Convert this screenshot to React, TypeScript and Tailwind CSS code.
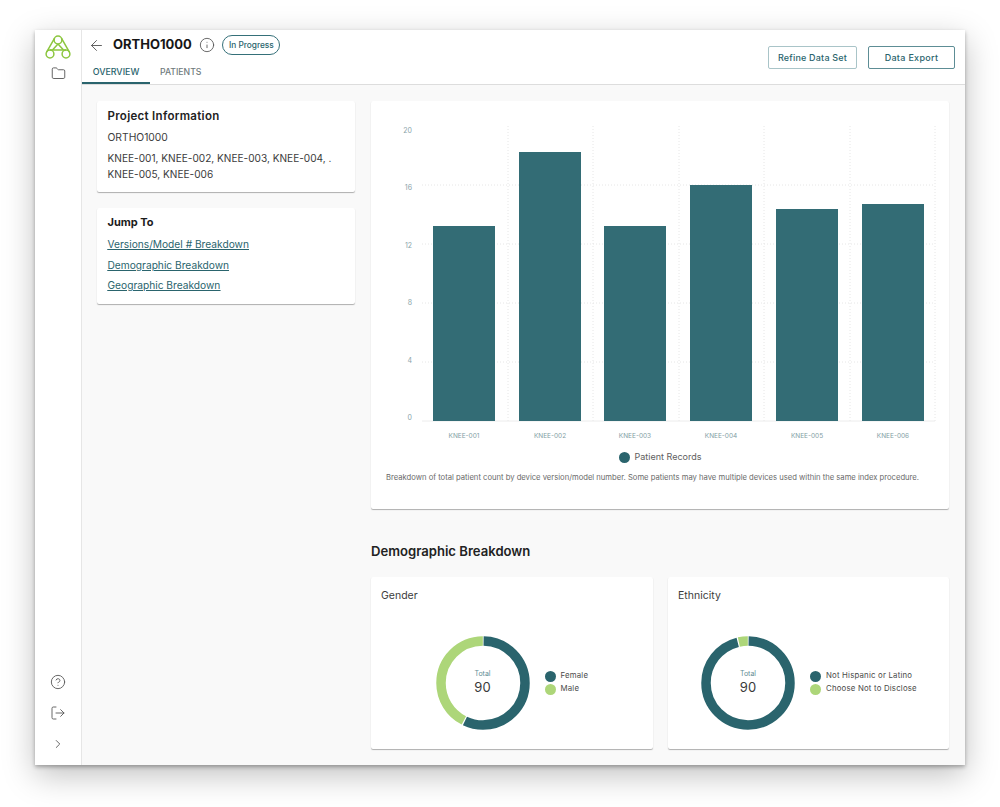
import { ArrowLeft, ChevronRight, CircleHelp, Folder, Info, LogOut } from "lucide-react";

const teal = "#2a646d";
const green = "#add679";
const bars = [
  { name: "KNEE-001", x: 62, top: 226 },
  { name: "KNEE-002", x: 148, top: 152 },
  { name: "KNEE-003", x: 233, top: 226 },
  { name: "KNEE-004", x: 319, top: 185 },
  { name: "KNEE-005", x: 405, top: 209 },
  { name: "KNEE-006", x: 491, top: 204 },
];

function BarChart() {
  // coordinates follow the card: x from 371, y from 101
  const y0 = 320;
  const grid = [261, 202, 143, 84];
  const verticals = [137, 222, 308, 393, 479, 564];
  const ticks = [
    { label: "20", y: 32 },
    { label: "16", y: 89 },
    { label: "12", y: 147 },
    { label: "8", y: 204 },
    { label: "4", y: 262 },
    { label: "0", y: 319 },
  ];
  return (
    <svg width="578" height="345" viewBox="0 0 578 345" className="block">
      {grid.map((y) => (
        <line key={y} x1="51" x2="564" y1={y} y2={y} stroke="#e6e6e6" strokeWidth="1" strokeDasharray="1 2" />
      ))}
      {verticals.map((x) => (
        <line key={x} x1={x} x2={x} y1="25" y2={y0} stroke="#e6e6e6" strokeWidth="1" strokeDasharray="1 2" />
      ))}
      <line x1="51" x2="564" y1={y0} y2={y0} stroke="#ececec" strokeWidth="1" />
      {ticks.map((t) => (
        <text key={t.label} x="41" y={t.y} textAnchor="end" fontSize="7" fill="#8aa4aa">
          {t.label}
        </text>
      ))}
      {bars.map((b) => (
        <g key={b.name}>
          <rect x={b.x} y={b.top - 101} width="62" height={421 - b.top} fill="#336c75" />
          <text x={b.x + 31} y="337" textAnchor="middle" fontSize="6.5" fill="#7f9ea4">
            {b.name}
          </text>
        </g>
      ))}
    </svg>
  );
}

function Donut({ tealDeg }: { tealDeg: number }) {
  const r = 42;
  const c = 2 * Math.PI * r;
  const gap = 1.2;
  const tealLen = (tealDeg / 360) * c;
  const greenLen = c - tealLen;
  return (
    <div className="relative w-[94px] h-[94px] shrink-0">
      <svg width="94" height="94" viewBox="0 0 94 94" className="block -rotate-90">
        <circle
          cx="47"
          cy="47"
          r={r}
          fill="none"
          stroke={teal}
          strokeWidth="9.5"
          strokeDasharray={`${tealLen - gap} ${greenLen + gap}`}
          strokeDashoffset={-gap / 2}
        />
        <circle
          cx="47"
          cy="47"
          r={r}
          fill="none"
          stroke={green}
          strokeWidth="9.5"
          strokeDasharray={`${greenLen - gap} ${tealLen + gap}`}
          strokeDashoffset={-(tealLen + gap / 2)}
        />
      </svg>
      <div className="absolute inset-0 flex flex-col items-center justify-center">
        <span className="text-[7px] leading-[10px] text-[#5f8d95]">Total</span>
        <span className="text-[13px] leading-[18px] -mt-px text-[#3a3a3a]">90</span>
      </div>
    </div>
  );
}

function LegendRow({ color, label }: { color: string; label: string }) {
  return (
    <div className="flex items-center gap-[5px] h-[13px]">
      <span className="w-[11px] h-[11px] rounded-full" style={{ backgroundColor: color }} />
      <span className="text-[7.8px] tracking-[0.2px] text-[#4a4a4a]">{label}</span>
    </div>
  );
}

function Logo() {
  return (
    <svg width="28" height="25" viewBox="0 0 28 25" fill="none" stroke="#8cc63f" strokeWidth="1.5">
      <circle cx="14" cy="5" r="3.9" />
      <circle cx="6" cy="19" r="3.9" />
      <circle cx="22" cy="19" r="3.9" />
      <path d="M10.6 3.1 2.6 17.1M17.4 3.1 25.4 17.1M14 8.9 8 15.5M14 8.9 20 15.5M6 15.1h16" />
    </svg>
  );
}

export default function App() {
  return (
    <div className="w-[1000px] h-[807px] bg-white pt-[30px] pl-[35px] font-['Inter','Noto_Sans',sans-serif]">
      <div className="w-[930px] h-[735px] flex overflow-hidden bg-white shadow-[0_2px_4px_rgba(0,0,0,0.3),0_10px_30px_rgba(0,0,0,0.25)]">
        <aside className="w-[47px] shrink-0 border-r border-[#e6e6e6] flex flex-col items-center pt-[5px] pb-[5.5px] text-[#5c5c5c]">
          <Logo />
          <Folder size={15} strokeWidth={1.5} className="mt-[6px]" />
          <div className="mt-auto flex flex-col items-center">
            <span className="h-[31px] flex items-center">
              <CircleHelp size={16} strokeWidth={1.4} />
            </span>
            <span className="h-[31px] flex items-center">
              <LogOut size={16} strokeWidth={1.4} />
            </span>
            <span className="h-[31px] flex items-center">
              <ChevronRight size={14} strokeWidth={1.6} />
            </span>
          </div>
        </aside>
        <div className="flex-1 min-w-0 flex flex-col">
          <header className="h-[55px] shrink-0 border-b border-[#dddddd] flex justify-between">
            <div className="flex flex-col">
              <div className="flex items-center h-[31px] pl-[6px]">
                <ArrowLeft size={17} strokeWidth={1.3} className="text-[#555]" />
                <span className="ml-[8px] text-[13px] font-bold text-[#161616]">ORTHO1000</span>
                <Info size={16} strokeWidth={1.3} className="ml-[7px] text-[#555]" />
                <span className="ml-[7.5px] w-[58px] h-[20px] flex items-center justify-center rounded-full border border-[#357079] text-[8.3px] font-medium text-[#2a646d]">
                  In Progress
                </span>
              </div>
              <nav className="flex flex-1">
                <span className="w-[68px] h-[24px] pt-px flex items-center justify-center border-b-2 border-[#2a646d] text-[8.9px] font-medium text-[#2a646d]">
                  OVERVIEW
                </span>
                <span className="ml-[10px] h-[24px] pt-px flex items-center text-[8.7px] font-medium text-[#6f7a7c]">
                  PATIENTS
                </span>
              </nav>
            </div>
            <div className="flex items-start pt-[16px] pr-[10px] gap-[11px]">
              <button className="w-[89px] h-[23px] rounded-[2px] border border-[#a9c4c8] text-[9px] tracking-[0.2px] font-medium text-[#2a646d]">
                Refine Data Set
              </button>
              <button className="w-[87px] h-[23px] rounded-[2px] border border-[#5d8d95] text-[9px] tracking-[0.3px] font-medium text-[#2a646d]">
                Data Export
              </button>
            </div>
          </header>
          <main className="flex-1 min-h-0 overflow-hidden bg-[#f9f9f9] flex pl-[15px] pt-[16px] gap-[16px]">
            <div className="w-[258px] shrink-0 flex flex-col gap-[16px]">
              <section className="h-[91px] bg-white rounded-[2px] shadow-[0_1px_1px_rgba(0,0,0,0.3)] pl-[10.5px] pr-2 pt-[7px]">
                <h2 className="text-[11.5px] leading-[16px] tracking-[0.3px] font-semibold text-[#222]">
                  Project Information
                </h2>
                <p className="mt-[6px] text-[10.3px] leading-[14px] text-[#3c3c3c]">ORTHO1000</p>
                <p className="mt-[5.5px] text-[10.1px] leading-[16px] text-[#3c3c3c]">
                  KNEE-001, KNEE-002, KNEE-003, KNEE-004, .
                  <br />
                  KNEE-005, KNEE-006
                </p>
              </section>
              <section className="h-[96px] bg-white rounded-[2px] shadow-[0_1px_1px_rgba(0,0,0,0.3)] pl-[10.5px] pt-[6px]">
                <h2 className="text-[11px] leading-[16px] font-bold text-[#1c1c1c]">Jump To</h2>
                <div className="mt-[7px] flex flex-col gap-[5.5px] text-[10.2px] leading-[15px] text-[#2a646d] underline">
                  <a>Versions/Model # Breakdown</a>
                  <a>Demographic Breakdown</a>
                  <a>Geographic Breakdown</a>
                </div>
              </section>
            </div>
            <div className="w-[578px] shrink-0 flex flex-col">
              <section className="h-[408px] shrink-0 bg-white rounded-[2px] shadow-[0_1px_1px_rgba(0,0,0,0.3)] flex flex-col">
                <BarChart />
                <div className="mt-[4px] flex items-center justify-center gap-[5px] h-[14px]">
                  <span className="w-[11px] h-[11px] rounded-full bg-[#2a646d]" />
                  <span className="text-[9px] text-[#5e5e5e]">Patient Records</span>
                </div>
                <p className="mt-[8px] pl-[15px] whitespace-nowrap text-[7.65px] leading-[12px] text-[#6a6a6a]">
                  Breakdown of total patient count by device version/model number. Some patients may have multiple
                  devices used within the same index procedure.
                </p>
              </section>
              <h2 className="mt-[33px] text-[13.1px] leading-[18px] font-semibold text-[#222]">Demographic Breakdown</h2>
              <div className="mt-[17px] flex gap-[15px]">
                <section className="w-[282px] h-[172px] bg-white rounded-[2px] shadow-[0_1px_1px_rgba(0,0,0,0.3)] pl-[10px] pt-[12px]">
                  <h3 className="text-[10.5px] leading-[14px] text-[#3c3c3c]">Gender</h3>
                  <div className="mt-[32.5px] pl-[54.5px] flex items-center gap-[15px]">
                    <Donut tealDeg={206} />
                    <div className="flex flex-col">
                      <LegendRow color={teal} label="Female" />
                      <LegendRow color={green} label="Male" />
                    </div>
                  </div>
                </section>
                <section className="w-[281px] h-[172px] bg-white rounded-[2px] shadow-[0_1px_1px_rgba(0,0,0,0.3)] pl-[10px] pt-[12px]">
                  <h3 className="text-[10.5px] leading-[14px] text-[#3c3c3c]">Ethnicity</h3>
                  <div className="mt-[32.5px] pl-[23px] flex items-center gap-[15px]">
                    <Donut tealDeg={346} />
                    <div className="flex flex-col">
                      <LegendRow color={teal} label="Not Hispanic or Latino" />
                      <LegendRow color={green} label="Choose Not to Disclose" />
                    </div>
                  </div>
                </section>
              </div>
            </div>
          </main>
        </div>
      </div>
    </div>
  );
}
